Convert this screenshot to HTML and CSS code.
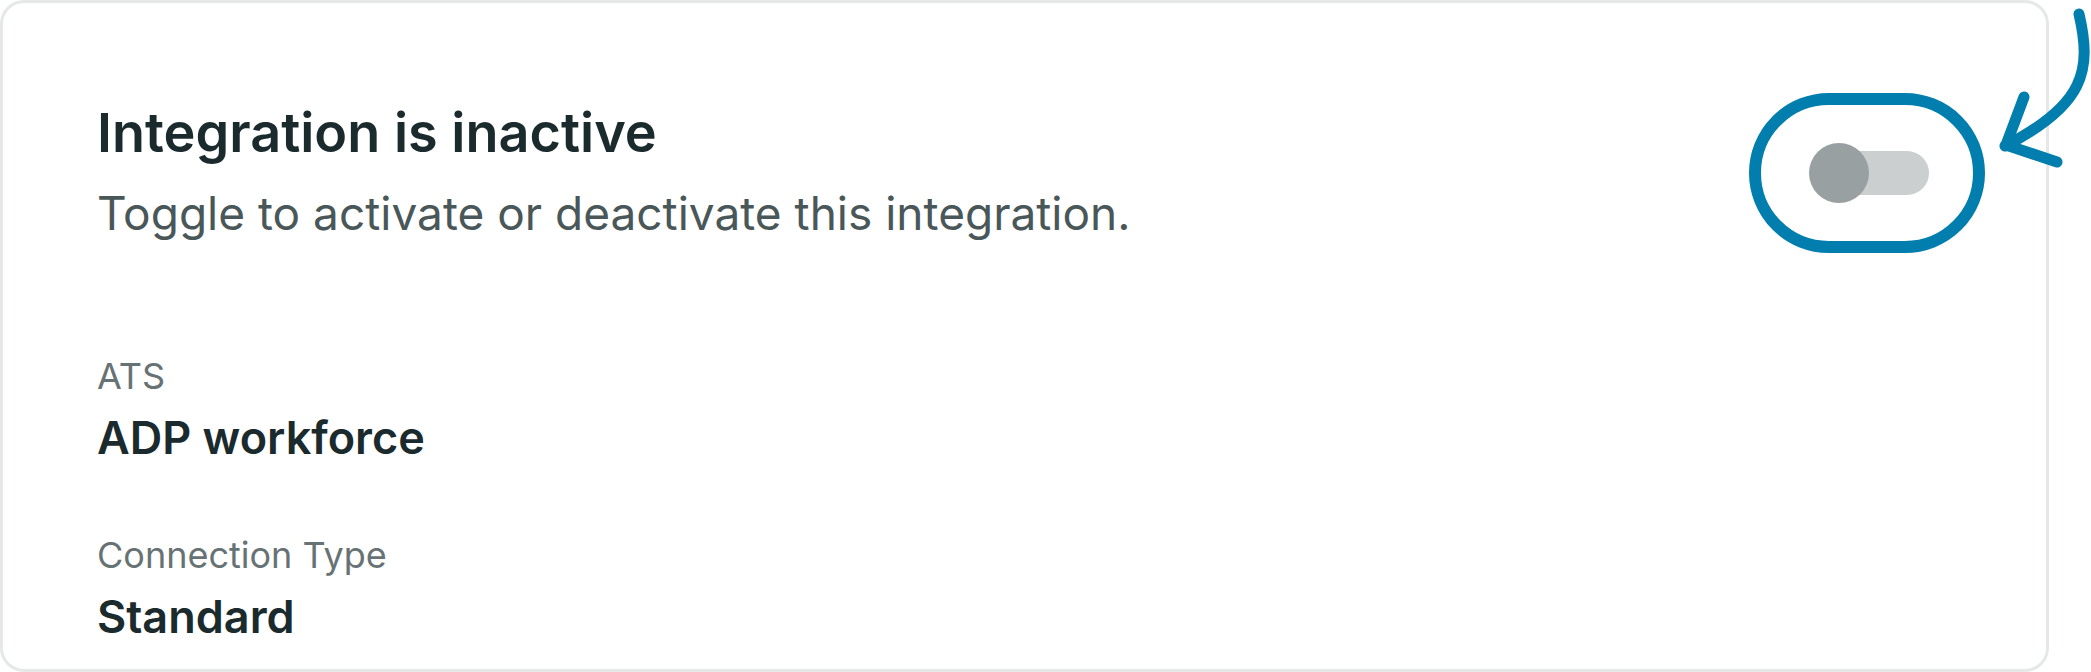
FILE: index.html
```html
<!DOCTYPE html>
<html lang="en">
<head>
<meta charset="utf-8">
<title>Integration</title>
<link rel="stylesheet" href="styles.css">
</head>
<body>
<div class="page">
  <section class="card">
    <div class="header">
      <div class="header-text">
        <h1 class="title">Integration is inactive</h1>
        <p class="subtitle">Toggle to activate or deactivate this integration.</p>
      </div>
      <div class="toggle-ring">
        <div class="toggle">
          <span class="track"></span>
          <span class="knob"></span>
        </div>
      </div>
    </div>
    <dl class="details">
      <div class="field">
        <dt class="label">ATS</dt>
        <dd class="value">ADP workforce</dd>
      </div>
      <div class="field">
        <dt class="label">Connection Type</dt>
        <dd class="value">Standard</dd>
      </div>
    </dl>
  </section>
  <svg class="arrow" width="110" height="180" viewBox="1981 0 110 180" aria-hidden="true">
    <path d="M2079 14 C2092 70 2085 105 2005 146" fill="none" stroke="#017ead" stroke-width="11" stroke-linecap="round"/>
    <path d="M2024 97 L2006 145 L2057 162" fill="none" stroke="#017ead" stroke-width="11" stroke-linecap="round" stroke-linejoin="round"/>
  </svg>
</div>
</body>
</html>
```
FILE: styles.css
```css
html, body {
  margin: 0;
  padding: 0;
  background: #ffffff;
}
body {
  font-family: Inter, "Noto Sans", "Liberation Sans", sans-serif;
  width: 2091px;
  height: 672px;
  overflow: hidden;
}
.page {
  position: relative;
  width: 2091px;
  height: 672px;
}
.card {
  box-sizing: border-box;
  width: 2049px;
  height: 672px;
  border: 3px solid #e6e8e8;
  border-radius: 24px;
  background: #ffffff;
  padding: 94px 0 0 94px;
}
.header {
  display: flex;
  align-items: flex-start;
  justify-content: space-between;
  padding-right: 61px;
}
.title {
  margin: 0;
  font-size: 54px;
  line-height: 72px;
  font-weight: 600;
  color: #1a2a2d;
}
.subtitle {
  margin: 13px 0 0;
  font-size: 46px;
  line-height: 63px;
  font-weight: 400;
  color: #4a5759;
}
.toggle-ring {
  box-sizing: border-box;
  width: 236px;
  height: 160px;
  margin-top: -4px;
  border: 12px solid #017ead;
  border-radius: 80px;
  display: flex;
  align-items: center;
  justify-content: center;
}
.toggle {
  position: relative;
  width: 120px;
  height: 60px;
  margin-left: 4px;
}
.track {
  position: absolute;
  left: 8px;
  right: 0;
  top: 8px;
  height: 44px;
  border-radius: 22px;
  background: #cbcfcf;
}
.knob {
  position: absolute;
  left: 0;
  top: 0;
  width: 60px;
  height: 60px;
  border-radius: 50%;
  background: #99a0a1;
}
.details {
  margin: 96px 0 0;
  display: flex;
  flex-direction: column;
  gap: 59px;
}
.field {
  margin: 0;
}
.label {
  margin: 0;
  font-size: 36px;
  line-height: 54px;
  color: #677274;
}
.value {
  margin: 3px 0 0;
  font-size: 45px;
  line-height: 63px;
  font-weight: 600;
  color: #1a2a2d;
}
.arrow {
  position: absolute;
  left: 1981px;
  top: 0;
}
```
